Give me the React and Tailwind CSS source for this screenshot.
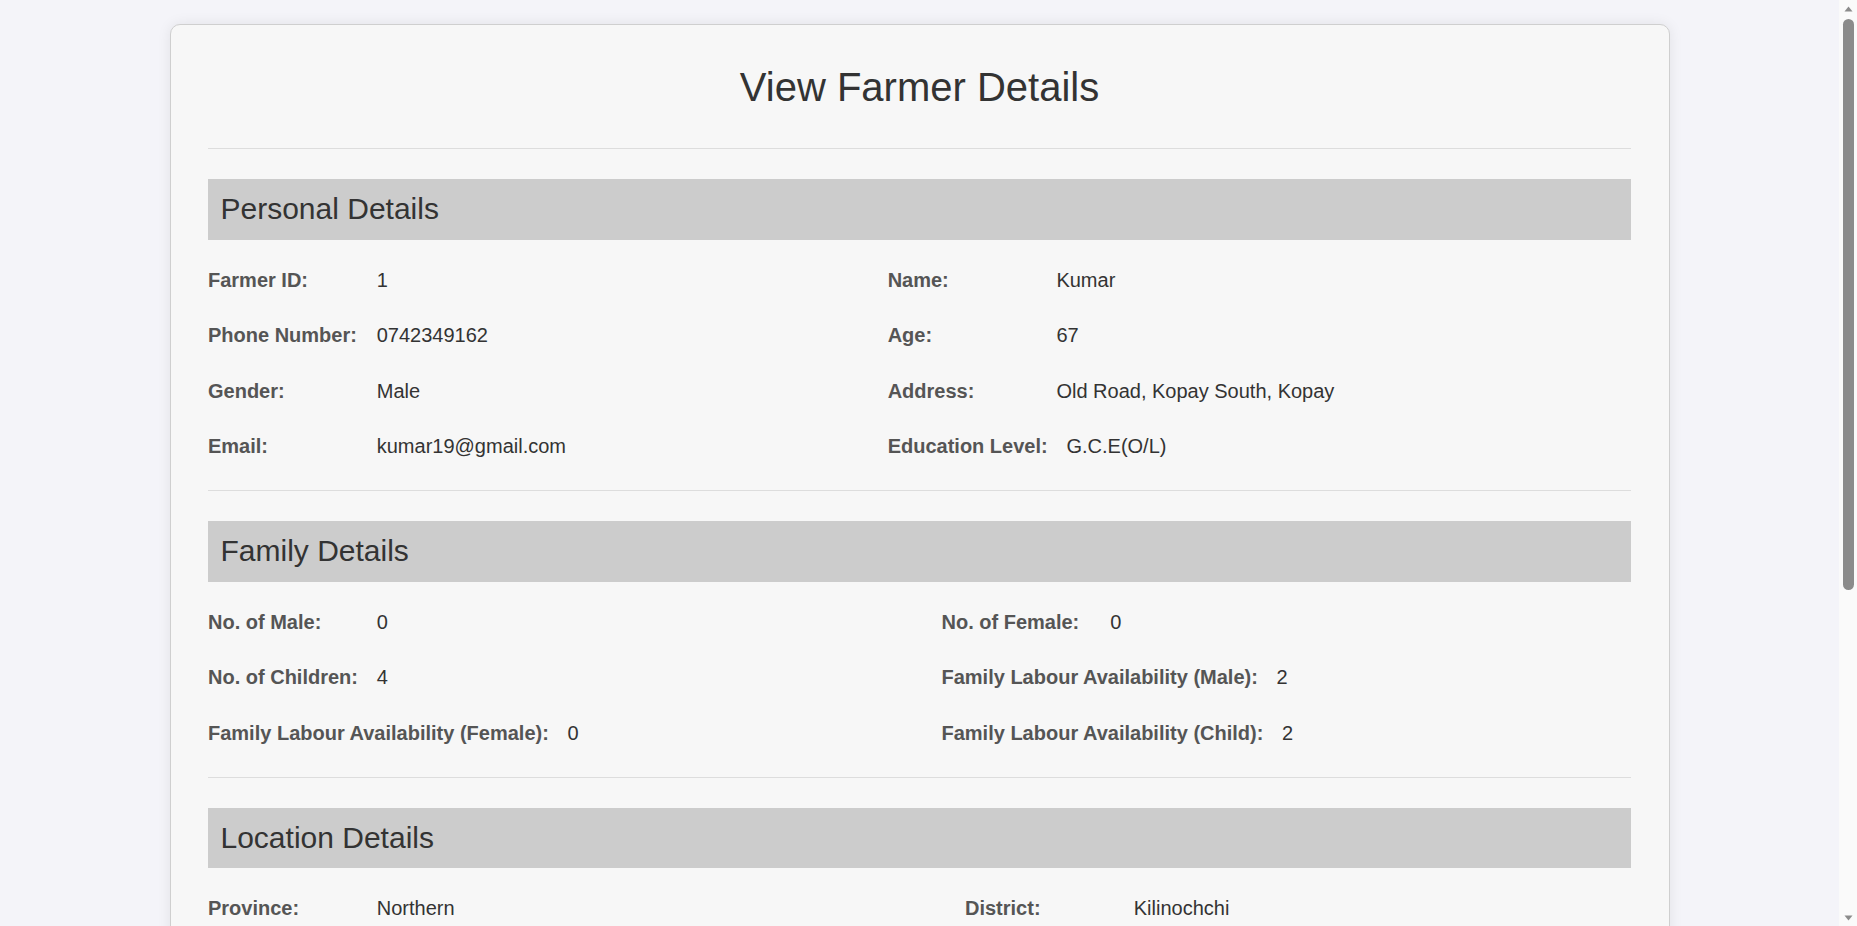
import React from "react";

const personal = [
  ["Farmer ID:", "1"],
  ["Name:", "Kumar"],
  ["Phone Number:", "0742349162"],
  ["Age:", "67"],
  ["Gender:", "Male"],
  ["Address:", "Old Road, Kopay South, Kopay"],
  ["Email:", "kumar19@gmail.com"],
  ["Education Level:", "G.C.E(O/L)"],
];

const family = [
  ["No. of Male:", "0"],
  ["No. of Female:", "0"],
  ["No. of Children:", "4"],
  ["Family Labour Availability (Male):", "2"],
  ["Family Labour Availability (Female):", "0"],
  ["Family Labour Availability (Child):", "2"],
];

const location = [
  ["Province:", "Northern"],
  ["District:", "Kilinochchi"],
];

function Item({ label, value }) {
  return (
    <div className="flex items-baseline text-[20px] leading-[23px] whitespace-nowrap">
      <span className="min-w-[150px] mr-[18.75px] font-bold text-[#555555]">{label}</span>
      <span className="text-[#333333]">{value}</span>
    </div>
  );
}

function Section({ title, items, cols }) {
  return (
    <section>
      <h2 className="bg-[#cccccc] px-[12.5px] py-[13px] text-[30px] leading-[34.5px] font-normal text-[#333333]">
        {title}
      </h2>
      <div className={`grid ${cols} gap-x-[25px] gap-y-[32.6px] mt-[29px]`}>
        {items.map(([l, v]) => (
          <Item key={l} label={l} value={v} />
        ))}
      </div>
    </section>
  );
}

function Divider({ className = "" }) {
  return <div className={`h-px bg-[#dddddd] ${className}`} />;
}

function ScrollBar() {
  return (
    <div className="w-[18px] shrink-0 bg-[#fafafa] flex flex-col items-center">
      <div className="h-[17px] flex items-center justify-center">
        <svg width="9" height="6" viewBox="0 0 9 6">
          <path d="M4.5 0.5 L8.5 5.5 L0.5 5.5 Z" fill="#8b8b8b" />
        </svg>
      </div>
      <div className="mt-[2px] ml-[1px] w-[11px] h-[571px] rounded-full bg-[#8b8b8b]" />
      <div className="flex-1" />
      <div className="h-[17px] flex items-center justify-center">
        <svg width="9" height="6" viewBox="0 0 9 6">
          <path d="M0.5 0.5 L8.5 0.5 L4.5 5.5 Z" fill="#8b8b8b" />
        </svg>
      </div>
    </div>
  );
}

export default function App() {
  return (
    <div
      className="flex h-screen bg-[#f4f4f9]"
      style={{ fontFamily: '"Liberation Sans", Arial, Helvetica, sans-serif' }}
    >
      <main className="flex-1 min-w-0 overflow-hidden pt-[24px]">
        <div className="mx-auto max-w-[1500px] rounded-[10px] border border-[#cfcfcf] bg-[#f7f7f7] px-[37.5px] pt-[39px] pb-[40px] shadow-[0_0_14px_rgba(0,0,0,0.08)]">
          <h1 className="text-center text-[40px] leading-[46px] font-normal text-[#333333] mb-[38px]">
            View Farmer Details
          </h1>
          <Divider className="mb-[30px]" />
          <Section title="Personal Details" items={personal} cols="grid-cols-[auto_auto]" />
          <Divider className="mt-[32px] mb-[30px]" />
          <Section title="Family Details" items={family} cols="grid-cols-[auto_auto]" />
          <Divider className="mt-[32px] mb-[30px]" />
          <Section title="Location Details" items={location} cols="grid-cols-[732px_auto]" />
        </div>
      </main>
      <ScrollBar />
    </div>
  );
}
